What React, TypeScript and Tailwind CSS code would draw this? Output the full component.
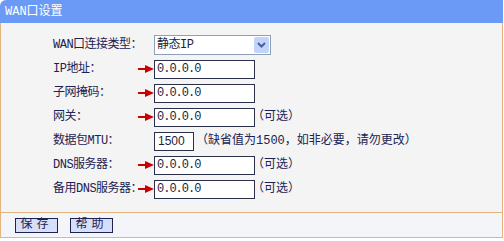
const FONT = '"Liberation Mono", "Noto Sans CJK SC", monospace'

function Arrow() {
  return (
    <svg width="17" height="10" viewBox="0 0 17 10" className="absolute left-[-17px] top-1/2 -translate-y-1/2">
      <line x1="1" y1="5" x2="10" y2="5" stroke="#c80000" strokeWidth="2" />
      <path d="M8 1 L17 5 L8 9 Z" fill="#c80000" />
    </svg>
  )
}

function IpInput({ value = '0.0.0.0', arrow = true }: { value?: string; arrow?: boolean }) {
  return (
    <div className="relative">
      {arrow && <Arrow />}
      <div className="flex h-[19px] w-[101px] items-center border border-[#2a2f4a] bg-white pl-[2px] text-[12px] tracking-[-1px] text-[#1a1f3a]">
        {value}
      </div>
    </div>
  )
}

function Hint({ children }: { children: React.ReactNode }) {
  return <span className="ml-[-3px] whitespace-nowrap text-[12px] text-[#1a2351]">{children}</span>
}

function Row({ label, children }: { label: string; children: React.ReactNode }) {
  return (
    <div className="flex h-[24px] items-center">
      <div className="w-[101px] whitespace-nowrap text-[12px] tracking-[-0.5px] text-[#1a2351]">{label}</div>
      {children}
    </div>
  )
}

export default function App() {
  return (
    <div className="h-[241px] w-[504px] bg-white" style={{ fontFamily: FONT }}>
      <div className="flex h-[23px] w-[503px] items-center rounded-tl-[6px] bg-[#6a9af6] pl-[5px] text-[12px] text-white">
        WAN口设置
      </div>
      <div className="w-[503px] border-x border-[#e2b47e] bg-[#f4f4f4] pb-[11px] pl-[52px] pt-[10px]">
        <Row label="WAN口连接类型：">
          <div className="flex h-[20px] w-[117px] items-center border border-[#8e9fb6] bg-white">
            <span className="flex-1 pl-[2px] text-[12px] tracking-[-0.5px] text-[#1a1f3a]">静态IP</span>
            <div className="mr-[1px] flex h-[16px] w-[15px] items-center justify-center rounded-[2px] bg-[#c3d4fb]">
              <svg width="9" height="6" viewBox="0 0 9 6">
                <path d="M1 1 L4.5 4.5 L8 1" fill="none" stroke="#4a5f9c" strokeWidth="2" />
              </svg>
            </div>
          </div>
        </Row>
        <Row label="IP地址：">
          <IpInput />
        </Row>
        <Row label="子网掩码：">
          <IpInput />
        </Row>
        <Row label="网关：">
          <IpInput />
          <Hint>（可选）</Hint>
        </Row>
        <Row label="数据包MTU：">
          <div className="flex h-[19px] w-[40px] items-center border border-[#2a2f4a] bg-white pl-[3px] text-[12px] text-[#1a1f3a]" style={{ fontFamily: '"Liberation Sans", sans-serif' }}>
            1500
          </div>
          <Hint>
            <span className="ml-[5px]">（缺省值为1500，如非必要，请勿更改）</span>
          </Hint>
        </Row>
        <Row label="DNS服务器：">
          <IpInput />
          <Hint>（可选）</Hint>
        </Row>
        <Row label="备用DNS服务器：">
          <IpInput />
          <Hint>（可选）</Hint>
        </Row>
      </div>
      <div className="flex h-[26px] w-[503px] items-center gap-[12px] border border-[#e2b47e] bg-[#f4f5f9] pl-[14px]">
        <button className="flex h-[15px] w-[43px] items-center justify-center border border-[#1a2351] bg-[#d6defa] text-[12px] tracking-[4px] text-[#1a2351]">
          保存
        </button>
        <button className="flex h-[15px] w-[43px] items-center justify-center border border-[#1a2351] bg-[#d6defa] text-[12px] tracking-[4px] text-[#1a2351]">
          帮助
        </button>
      </div>
    </div>
  )
}
